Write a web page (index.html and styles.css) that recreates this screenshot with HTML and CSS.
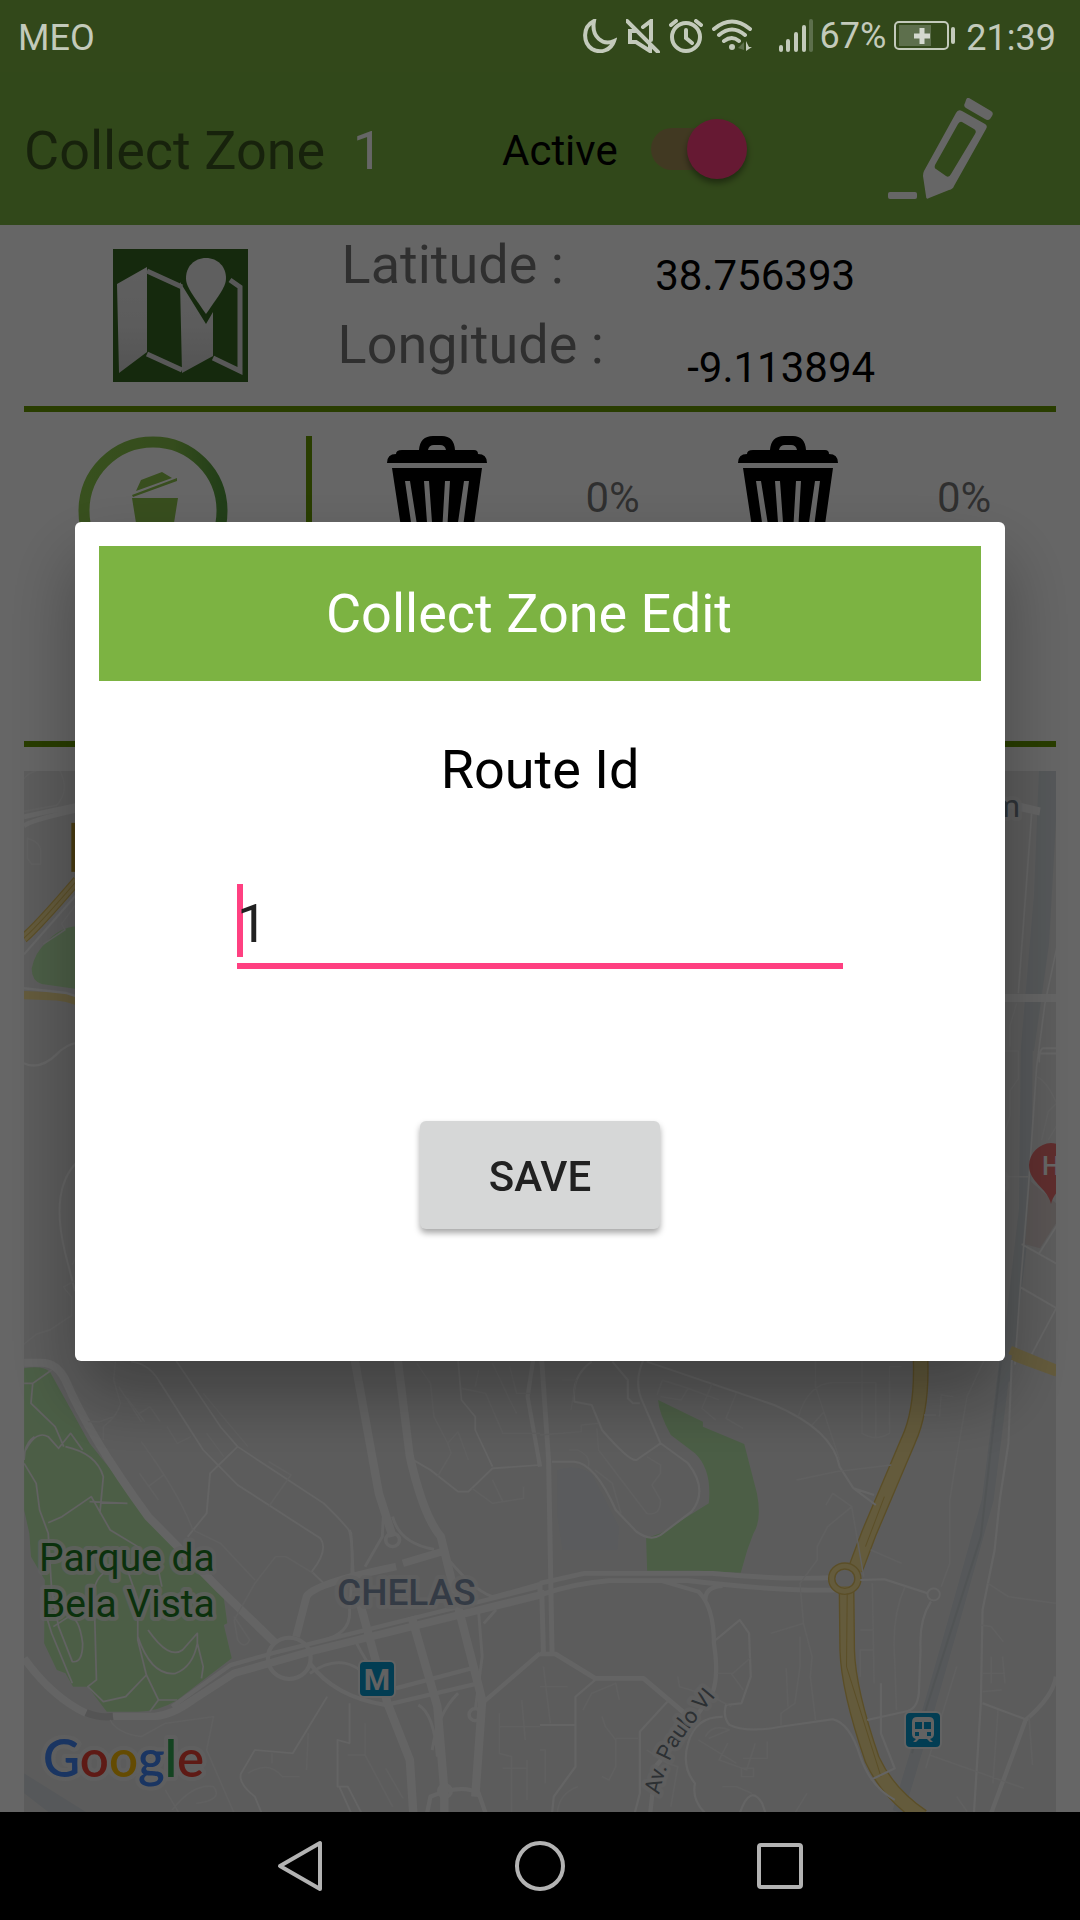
FILE: index.html
```
<!DOCTYPE html>
<html lang="en">
<head>
<meta charset="utf-8">
<meta name="viewport" content="width=device-width, initial-scale=1">
<title>Collect Zone</title>
<link rel="stylesheet" href="styles.css">
</head>
<body>
<div class="status">
  <span class="status-text">MEO</span>
  <div class="status-icons">
    <svg width="34" height="34" viewBox="0 0 34 34" class="line-icon"><path d="M11 2C-1 8 0 24 9 30c9 5 19 1 22-8C20 27 8 18 11 2Z"/></svg>
    <svg width="34" height="34" viewBox="0 0 34 34" class="line-icon"><path d="M1 2l31 31M17 8l8-6v19M10 12H4v11h6l14 9v-6"/></svg>
    <svg width="34" height="34" viewBox="0 0 34 34" class="line-icon"><circle cx="17" cy="18" r="14"/><path d="M17 11v8l6 5M2 6l5-4M32 6l-5-4"/></svg>
    <svg width="40" height="34" viewBox="0 0 40 34" class="line-icon"><path d="M2 10Q20-5 38 10M7 16Q20 5 33 16M12 22q8-6 15 0"/><circle cx="20" cy="28" r="3" class="solid"/><path d="M34 22v10l6-4h-3z" class="solid"/><path d="M26 29l6-6v8z" class="faint"/></svg>
  </div>
  <svg width="36" height="34" viewBox="0 0 36 34" class="signal line-icon"><path d="M3 28v3M10 22v9M18 15v16M26 8v23" /><path d="M33 2v29" class="dim"/></svg>
  <span class="battery-text">67%</span>
  <svg width="62" height="34" viewBox="0 0 62 34"><rect x="1" y="3" width="53" height="27" rx="4" fill="none" stroke="#c3cabb" stroke-width="2"/><rect x="5" y="6" width="32" height="21" fill="#5d6f4c"/><path d="M28 9v16M20 17h16" stroke="#d4d9cf" stroke-width="5"/><path d="M59 10v13" stroke="#c3cabb" stroke-width="4" stroke-linecap="round"/></svg>
  <span class="status-text">21:39</span>
</div>

<div class="page">
  <header class="appbar">
    <h1 class="title">Collect Zone <span class="zone-number">1</span></h1>
    <label class="active-label" for="active">Active</label>
    <input class="switch" id="active" type="checkbox" role="switch" checked>
    <button class="edit" aria-label="Edit zone"><svg width="106" height="102" viewBox="0 0 106 102" fill="#fff"><rect x="0" y="94" width="29" height="7" rx="2"/><path d="M81 0L103 13Q106 15 104 18L102 21Q100 23 97 21L78 10Q75 8 77 5L78 2Q79-1 81 0Z"/><path fill-rule="evenodd" d="M74 13L97 26Q100 28 98 31L66 88Q65 91 61 92L41 100Q38 102 38 98L35 78Q35 75 36 73L68 15Q70 11 74 13ZM74 24Q72 23 70 26L47 67Q46 70 48 71L58 78Q61 80 63 76L87 36Q89 33 86 31Z"/></svg></button>
  </header>

  <main class="content">
    <section class="position">
      <svg class="map-icon" viewBox="0 0 135 133"><defs><linearGradient id="paper" x2="0" y2="1"><stop stop-color="#eee"/><stop offset=".55" stop-color="#e6e6e6"/><stop offset="1" stop-color="#d0d0d0"/></linearGradient></defs><rect width="135" height="133" fill="#356721"/><path fill="url(#paper)" d="M4 35L34 18V103L6 124ZM67 33L93 75L100 63V107L69 124Z"/><path fill="none" stroke="#ddd" stroke-width="5" d="M34 22L69 38M34 105L69 121M100 109L127 122V38L117 31"/><path fill="#ededed" d="M93 9c-12 0-20 9-20 20 0 7 3 12 20 36 17-24 20-29 20-36 0-11-8-20-20-20z"/></svg>
      <div class="labels"><span class="latitude">Latitude :</span><span>Longitude :</span></div>
      <div class="values"><span>38.756393</span><span class="longitude">-9.113894</span></div>
    </section>
    <section class="bins">
      <div class="bin-logo"><svg width="150" height="150" viewBox="0 0 150 150"><defs><linearGradient id="ring"><stop stop-color="#8cc84b"/><stop offset=".65" stop-color="#84be49"/><stop offset="1" stop-color="#559b3e"/></linearGradient></defs><circle cx="75" cy="75" r="69" fill="none" stroke="url(#ring)" stroke-width="11"/><path fill="#8cc34b" d="M54 62H100L91 118H63ZM54 59L99 42V45L55 61ZM58 55L63 44L84 36L94 42Z"/></svg></div>
      <div class="bin-list">
        <svg class="bin" width="100" height="124" viewBox="0 0 100 124"><path id="bin-shape" fill-rule="evenodd" d="M0 27Q0 18 9 18Q9 14 15 14H32Q33 0 46 0H55Q67 0 68 14H87Q91 14 91 18Q100 18 100 27ZM41 14H59Q58 9 53 9H47Q42 9 41 14ZM5 32H95L82 124H19ZM18 45L28 114H34L23 45ZM37 45L42 114H47L42 45ZM58 45L54 114H59L63 45ZM77 45L67 114H73L82 45Z"/></svg>
        <span class="level">0%</span>
        <svg class="bin" width="100" height="124" viewBox="0 0 100 124"><use href="#bin-shape"/></svg>
        <span class="level">0%</span>
      </div>
    </section>
    <section class="map">
      <svg class="map-art" viewBox="0 0 1032 1041" preserveAspectRatio="xMidYMid slice" aria-label="Map of Chelas">
        <rect width="1032" height="1041" fill="#e7e7e7"/>
        <!-- north-west edge -->
        <g transform="translate(-24 -31) scale(.3333 .4082)" class="roads">
          <path d="M95 560Q105 520 140 495Q175 460 230 456V610L125 598Q95 590 95 560Z" class="park"/>
          <path d="M72 485Q120 450 230 345" class="motor-edge w26"/><path d="M72 485Q120 450 230 345" class="motor w20"/><path d="M72 485Q120 450 230 345" class="motor-edge w2"/>
          <path d="M214 203h20v120h-20z" class="shield"/>
          <path d="M72 625L170 628Q200 630 230 640" class="motor w20"/>
          <path d="M72 188L230 160M72 210Q100 195 230 172" class="w12"/>
          <path d="M72 525L230 378M72 608L200 620L230 628M72 792Q120 810 170 770Q200 745 230 742M230 1035Q150 1100 195 1255L225 1350" class="w6"/>
          <path d="M72 95Q85 80 110 75M180 75Q210 125 170 160L72 175M80 240Q120 250 122 270V304H95L82 290V240M230 400L185 450L195 465L130 500M72 1480L110 1455L150 1445L215 1410V1365L190 1340L225 1325M215 1285Q228 1275 230 1250" class="small"/>
        </g>
        <!-- eastern edge -->
        <g transform="translate(956 -31) scale(.3333 .4082)" class="roads">
          <path d="M195 70L180 380L140 760L135 1150L75 1570" class="rail w36"/><path d="M225 70L195 500L150 760" class="rail w24"/>
          <path d="M150 1080L235 1140V1175L180 1245L135 1235Z" class="clinic"/>
          <path d="M60 632H230M72 155L180 175" class="w20"/>
          <path d="M230 510L195 645L170 800L145 1100L120 1350L105 1530M155 180L115 620M230 755H190Q178 755 178 790M178 768H230M125 1235L230 1283M120 1340L230 1392M230 1390L155 1505M178 1257L230 1190" class="w5"/>
          <path d="M110 645L90 700V750M72 762H115V830L90 860V920L75 960V1070H145M170 825Q200 835 230 890L205 910L185 980M205 980L230 945" class="small"/>
          <path d="M95 1507L230 1548" class="motor w24"/>
        </g>
        <!-- south-west quarter -->
        <g transform="translate(-24 579) scale(.3444 .3333)" class="roads">
          <path d="M70 55Q120 45 145 65L260 280L440 510L650 745L660 820L650 825L673 925L515 1050Q460 1085 400 1085H310L255 1010H212L190 970L165 960L128 880L130 690L90 620L85 550L70 480Z" class="park"/>
          <path d="M70 1270L250 1386H140L70 1330Z" class="rail-fill"/>
          <path d="M70 38H120Q165 38 190 90Q260 260 430 500L640 720L800 880" class="w24"/>
          <path d="M70 925Q150 1040 250 1090M328 1099H450Q500 1095 560 1050L680 970L900 905L1568 735" class="w22"/>
          <path d="M250 1088Q290 1105 328 1099" class="tunnel w22"/>
          <path d="M500 1070L670 945L790 910L1568 710" class="w12"/>
          <circle cx="840" cy="925" r="62" class="w12"/>
          <path d="M1030 30L1100 430L1140 560M1155 30L1190 320Q1230 500 1280 560L1330 770L1400 1050L1380 1340M1040 740L1125 1060L1190 1230L1200 1390M1195 800L1270 1070L1290 1320V1390" class="w24"/>
          <path d="M860 860L890 740Q910 700 1150 650M1170 640L1300 600" class="w22"/>
          <path d="M900 940Q970 1040 1120 1065L1390 1000M1150 1015L1370 955M1400 1060L1568 910M1240 1390L1250 1340Q1340 1300 1390 1330L1410 1390M1548 30L1532 140L1568 350" class="w12"/>
          <circle cx="1140" cy="570" r="20" class="w10"/><circle cx="1380" cy="1094" r="18" class="w10"/><circle cx="1292" cy="1323" r="18" class="w10"/>
          <path d="M1115 460L1110 560L1060 650M1140 500Q1160 580 1260 598M1280 600Q1370 720 1430 740L1568 700M1015 540Q1030 600 1015 780Q1020 850 940 870M1030 870Q1070 950 1110 1000M1390 790L1400 920L1380 1080M1440 780L1405 820M1215 1065Q1260 1090 1270 1220M1330 1030Q1270 1090 1255 1200M900 970Q1010 890 1090 1010" class="w8"/>
          <path d="M380 35Q430 40 460 90L590 300L690 405L930 565Q955 600 905 665L950 710M510 30L640 230L690 290L940 460Q1000 520 1020 550L1030 720M690 290L610 370L600 490L545 560M950 1040L850 1210L740 1200L700 1270Q690 1300 740 1340L760 1390M1015 1060V1180L980 1170V1310H1010L1050 1390M985 1310L1020 1390M1200 330L1250 360L1330 425H1360L1430 355L1568 345M1330 30L1340 150L1380 200V240L1430 350" class="w5"/>
          <path d="M335 35L330 90L350 160Q340 200 300 230V270M255 215H290L330 200M345 110L410 215M370 145L420 215M405 190L435 170L465 215M485 230L515 280L555 260M600 250L650 320M405 370L460 450M430 410L475 375M410 275Q520 430 560 540L640 580L740 690M590 130L720 290M780 335L845 375L780 470M800 620L740 700L680 810L690 870Q710 900 725 870L680 800M800 620H830L910 670M320 1110Q340 1150 410 1160L480 1120L620 1100L600 1200L680 1390M480 1320L520 1390M570 1360Q650 1350 620 1310Q560 1300 500 1380M790 1210V1240M720 1270Q780 1230 820 1280H870M895 1150L890 1260M1060 1120V1215L1140 1370M1010 1215H1060M1120 1255L1170 1345M1210 40L1250 100L1260 200L1300 280L1310 310L1270 380M1390 60L1380 110M1430 40L1480 150M1340 115L1410 130L1460 250H1568M1330 245L1300 280M1330 245L1360 330M1430 390L1460 455M1370 415L1430 460L1520 445V410M1480 50L1500 130H1540M1480 150L1500 190M1450 1090V1210L1485 1220V1386M1450 1130H1568M1515 1050L1525 1170M1530 1230V1350M1460 1255H1530" class="small"/>
          <path d="M70 100H95L150 60M95 100L90 160L160 230L185 290M75 300Q105 240 140 260L170 295L205 250L240 300M70 330Q70 280 100 260M190 290Q280 310 300 380L290 490M70 340L105 400L115 480L140 550L150 720L170 830L210 935Q240 940 240 880Q230 800 200 800L155 830M140 518L180 500L265 440L320 540L400 590L460 660L470 710M260 455L370 460M135 800L150 850L210 1000M300 670Q260 700 275 800L280 990L255 1010L300 1055L365 1040L425 975L400 870V750L370 660M425 975L460 1050H515M400 860Q440 980 510 970Q560 950 573 880V850L530 900Q490 930 430 840M573 880L590 950L585 985M435 1085L460 1050" class="park-path"/>
        </g>
        <!-- south-east quarter -->
        <g transform="translate(516 579) scale(.3444 .3333)" class="roads">
          <path d="M343 150L473 215V230L593 282L630 430Q645 510 620 550L602 600L583 668L460 662H311L308 565L350 550L490 460Q500 360 450 310L380 255Q345 190 343 150Z" class="park"/>
          <path d="M50 360Q100 340 150 370L230 530L225 600H65L50 500Z" class="grounds"/>
          <path d="M1355 0L1300 450L1200 820L1100 1180L1040 1386" class="rail w34"/><path d="M1340 20L1280 560L1080 1210" class="rail-center"/>
          <path d="M0 700L130 670L280 670H500Q700 690 850 683M0 735Q100 700 200 692H430Q700 725 860 720" class="w14"/>
          <path d="M5 30L25 330L35 910M5 720L10 910M0 912H45L160 985H300L420 1090M0 700V730" class="w14"/>
          <path d="M320 1390L335 1250L440 1120L500 1030Q520 980 505 880Q505 770 460 725L350 692M480 750Q480 710 530 708M1310 1390L1410 1110Q1490 1040 1498 980" class="w12"/>
          <path d="M1105 30Q1110 180 1070 270L955 550L915 660M890 710L892 900Q895 1020 965 1230Q1010 1330 1110 1400" class="motor-edge w46"/><path d="M1105 30Q1110 180 1070 270L955 550L915 660M890 710L892 900Q895 1020 965 1230Q1010 1330 1110 1400" class="motor w38"/>
          <circle cx="885" cy="686" r="38" class="motor-edge w22"/><circle cx="885" cy="686" r="38" class="motor w14"/>
          <path d="M1000 440L945 590M892 730L890 950L990 1280" class="motor-edge w2"/>
          <path d="M1365 0L1500 58" class="motor w26"/>
          <path d="M1370 30L1360 280L1335 450L1320 600L1285 780L1280 1060L1260 1390M300 30Q270 100 300 160L350 280L430 340Q490 420 440 485L350 555Q320 575 280 545L220 480Q160 340 100 335H35M350 280L280 330Q260 335 180 240L150 165L100 155Q90 80 150 35M210 35L255 90V145L270 160H290M310 35L680 165Q850 240 870 350L910 415L970 435M910 415L975 465M930 690L1000 688L1125 730M1135 755Q1100 810 1105 900L1100 1030Q1095 1080 1060 1085L950 1110M370 1055L290 1145V1330L275 1390M510 870L580 810L607 850L612 980L585 1060L540 1065Q530 1100 550 1125Q600 1150 700 1130L850 1108Q900 1120 930 1220Q960 1310 1030 1350M530 1100Q450 1100 430 1180Q410 1250 450 1300Q440 1350 480 1390M580 1390Q610 1300 645 1360L655 1390M1285 1060L1410 1108M160 990L103 1040V1250L40 1340L35 1390M0 1125H100M990 1000L990 1150L1030 1255L960 1290" class="w6"/>
          <circle cx="1143" cy="733" r="18" class="w5"/>
          <path d="M0 255L120 245V225L170 220M65 90H105L90 180M165 235L170 300L310 490Q350 500 350 450L325 405L350 370V345L310 320M160 360L210 400L235 490M85 300H110Q150 320 140 350M340 135L355 90L430 115L410 150L350 140M430 115L520 150M500 100L470 175L510 210M570 130L540 205L590 235M800 30V110L870 330M750 200Q780 100 850 98H975V265M935 30V250Q975 275 1015 250V50L1050 50M790 225L825 185M745 390L860 365L1020 345M830 465L850 430L905 470L835 530L805 590V630L755 700L765 820L790 920L785 980L800 1110M905 470L940 680M960 600L1050 640M670 850L765 820M755 860V950L740 1060L700 1090V1125M715 955L720 1070M965 700L970 1000M1060 710Q1020 800 1030 930L1035 1080M930 840H965M970 900H930V980M1290 30L1240 140L1205 350L1190 450V640L1165 710M1160 200L1165 135L1200 140M1115 195H1150M1300 700L1360 740L1498 760M1280 825L1310 830L1345 875M1310 920V1000M1343 920L1350 1000M1285 970H1350M1285 1025L1340 1020M1330 1080L1315 1300M1420 1100L1430 1245M1130 1215L1405 1315M1210 950L1120 1255M400 980L405 1010L500 1040L555 1070M515 970H560L610 925M555 970L590 1020M480 1160Q500 1120 550 1140L490 1165M545 1180L520 1230L600 1260L625 1180M660 1175V1225H590M585 1255H620V1280H585ZM530 1310H570L615 1330M460 1170L570 1240M10 950L30 1120M0 1010H80M125 1080L150 1030L220 1000L230 1050M180 1100L190 1130L220 1170V1250L200 1290L180 1280M220 1165H285M0 1200H15V1300M50 1390Q55 1330 110 1310M310 1200L370 1240L400 1250L380 1370M775 1330L740 1390M1210 1340L1240 1385" class="small"/>
        </g>
        <g class="map-text">
          <text x="15" y="800" class="place-green">Parque da</text>
          <text x="17" y="846" class="place-green">Bela Vista</text>
          <text x="313" y="834" class="district">CHELAS</text>
          <path id="street" d="M635 1024Q642 992 656 971T706 908" fill="none"/>
          <text class="street"><textPath href="#street">Av. Paulo VI</textPath></text>
          <text x="968" y="46" class="street-large">m</text>
          <text x="966" y="419" class="hospital">s</text>
          <text x="19" y="1006" class="google"><tspan fill="#4285f4">G</tspan><tspan fill="#ea4335">o</tspan><tspan fill="#fbbc05">o</tspan><tspan fill="#4285f4">g</tspan><tspan fill="#34a853">l</tspan><tspan fill="#ea4335">e</tspan></text>
        </g>
        <g stroke="#f7f7f7" stroke-width="2"><rect x="335" y="890" width="36" height="36" rx="5" fill="#079ad0"/><rect x="881" y="941" width="36" height="36" rx="5" fill="#079ad0"/></g>
        <text x="353" y="919" class="metro">M</text>
        <path fill="#f4f4f4" fill-rule="evenodd" d="M893 946h12q5 0 5 5v12q0 4-4 5l3 3h-3l-3-3h-8l-3 3h-3l3-3q-4-1-4-5v-12q0-5 5-5ZM891 951v7h7v-7ZM900 951v7h7v-7ZM891 961v4h4v-4ZM903 961v4h4v-4Z"/>
        <path fill="#ed7272" d="M1027 372a23 23 0 0 0-22 22c0 18 18 22 22 39 4-17 22-21 22-39a23 23 0 0 0-22-22Z"/>
        <text x="1018" y="404" class="pin-letter">H</text>
      </svg>
    </section>
  </main>
</div>

<div class="scrim">
  <form class="dialog" role="dialog" aria-labelledby="dialog-title">
    <h2 class="dialog-title" id="dialog-title">Collect Zone Edit</h2>
    <label class="route-label" for="route">Route Id</label>
    <div class="route-field"><input class="route-input" id="route" type="text" value="1"></div>
    <button class="save" type="button">SAVE</button>
  </form>
</div>

<nav class="navbar" aria-label="System">
  <button aria-label="Back"><svg width="50" height="54" viewBox="0 0 50 54"><path d="M45 4V50L5 27Z"/></svg></button>
  <button aria-label="Home"><svg width="54" height="54" viewBox="0 0 54 54"><circle cx="27" cy="27" r="23"/></svg></button>
  <button aria-label="Recent apps"><svg width="50" height="54" viewBox="0 0 50 54"><rect x="4" y="6" width="42" height="42" rx="2"/></svg></button>
</nav>
</body>
</html>
```

FILE: styles.css
```
* { box-sizing: border-box; }
body {
  margin: 0;
  min-height: 100vh;
  display: flex;
  flex-direction: column;
  background: #fff;
  color: #000;
  font-family: Roboto, "Noto Sans", sans-serif;
}
h1, h2 { margin: 0; font-weight: 400; }
button { border: 0; padding: 0; background: none; font: inherit; }
svg { display: block; }

.status {
  position: relative;
  z-index: 2;
  height: 72px;
  padding: 0 24px 0 18px;
  display: flex;
  align-items: center;
  background: #32481a;
  color: #c3cabb;
  font-size: 36px;
}
.status-text { padding-top: 4px; }
.status-icons { display: flex; gap: 9px; margin-left: auto; }
.signal { margin: 0 6px 0 26px; }
.battery-text { margin-right: 8px; }
.battery-text + svg { margin-right: 10px; }
.line-icon { fill: none; stroke: #c3cabb; stroke-width: 4; stroke-linecap: round; }
.line-icon .solid { fill: #c3cabb; stroke: none; }
.line-icon .faint { fill: #5d6f4c; stroke: none; }
.line-icon .dim { stroke: #5d6f4c; }

.page { flex: 1; display: flex; flex-direction: column; }
.appbar {
  min-height: 153px;
  padding: 0 24px;
  display: grid;
  grid-template-columns: 478fr 149fr 237fr 168fr;
  align-items: center;
  background: #7cb342;
}
.title { padding-top: 4px; font-size: 54px; color: rgba(0, 0, 0, .52); }
.zone-number { margin-left: 14px; color: #fff; }
.active-label { padding-top: 4px; font-size: 42px; }
.switch { appearance: none; display: grid; align-items: center; width: 96px; height: 60px; margin: 0; }
.switch::before { content: ""; grid-area: 1 / 1; width: 80px; height: 42px; border-radius: 21px; background: rgba(255, 64, 129, .3); }
.switch::after { content: ""; grid-area: 1 / 1; justify-self: end; width: 60px; height: 60px; border-radius: 50%; background: #ff4081; box-shadow: 0 4px 6px rgba(0, 0, 0, .4); }
.edit { justify-self: start; }

.content { flex: 1; display: flex; flex-direction: column; padding: 0 24px; }
.position {
  min-height: 187px;
  display: grid;
  grid-template-columns: 3fr 3fr 4fr;
  border-bottom: 6px solid #690;
}
.map-icon { width: 135px; margin: 24px 0 0 89px; }
.labels, .values { display: flex; flex-direction: column; white-space: nowrap; }
.labels { padding-left: 4px; font-size: 54px; line-height: 80px; color: rgba(0, 0, 0, .54); }
.latitude { padding-left: 4px; }
.values { padding: 13px 0 0 12px; gap: 16px; font-size: 42px; line-height: 76px; }
.longitude { padding-left: 32px; }

.bins { display: flex; padding: 24px 0; min-height: 335px; border-bottom: 6px solid #690; }
.bin-logo { flex: 0 0 288px; padding-left: 54px; border-right: 6px solid #690; }
.bin-list { flex: 1; display: grid; grid-template-columns: repeat(4, 1fr); justify-items: center; padding: 0 4px 0 37px; }
.level { font-size: 42px; line-height: 123px; color: rgba(0, 0, 0, .54); }

.map { flex: 1; margin-top: 24px; position: relative; }
.map-art { position: absolute; inset: 0; width: 100%; height: 100%; }
.roads path, .roads circle { fill: none; stroke: #fbfbfb; stroke-linejoin: round; }
.roads .park { fill: #beecb0; stroke: none; }
.roads .rail-fill { fill: #d8dde0; stroke: none; }
.roads .shield { fill: #ba982e; stroke: none; }
.roads .clinic { fill: #dfd3d1; stroke: none; }
.roads .grounds { fill: #e0e3e8; stroke: none; }
.roads .tunnel { stroke: #d3d3d3; }
.roads .small { stroke: #f0f0f0; stroke-width: 4; }
.roads .park-path { stroke: #f4f4f4; stroke-width: 5; }
.roads .rail { stroke: #d6dce0; }
.roads .rail-center { stroke: #cbd1d5; stroke-width: 6; }
.roads .motor { stroke: #f9e397; }
.roads .motor-edge { stroke: #e4c462; }
.roads .w2 { stroke-width: 3; }
.roads .w5 { stroke-width: 5; }
.roads .w6 { stroke-width: 6; }
.roads .w8 { stroke-width: 8; }
.roads .w10 { stroke-width: 10; }
.roads .w12 { stroke-width: 12; }
.roads .w14 { stroke-width: 14; }
.roads .w20 { stroke-width: 20; }
.roads .w22 { stroke-width: 22; }
.roads .w24 { stroke-width: 24; }
.roads .w26 { stroke-width: 26; }
.roads .w34 { stroke-width: 34; }
.roads .w36 { stroke-width: 36; }
.roads .w38 { stroke-width: 38; }
.roads .w46 { stroke-width: 46; }
.map-text text { paint-order: stroke; stroke: rgba(240, 240, 240, .8); stroke-width: 8px; stroke-linejoin: round; }
.place-green { font-size: 39px; fill: #1d7a22; }
.district { font-size: 37px; font-weight: 500; fill: #8393ad; }
.street { font-size: 22px; fill: #6f7880; }
.street-large { font-size: 32px; fill: #75818c; }
.hospital { font-size: 32px; fill: #e26a6a; }
.google { font-family: Lato, sans-serif; font-size: 51px; font-weight: 600; }
.metro { font-size: 30px; font-weight: 700; fill: #f4f4f4; text-anchor: middle; }
.pin-letter { font-size: 26px; font-weight: 500; fill: #fff; }

.scrim {
  position: fixed;
  inset: 0;
  z-index: 1;
  display: grid;
  align-items: center;
  padding: 72px 75px 109px;
  background: rgba(0, 0, 0, .6);
}
.dialog {
  display: flex;
  flex-direction: column;
  align-items: center;
  padding: 24px 24px 132px;
  border-radius: 6px;
  background: #fff;
  box-shadow: 0 36px 72px rgba(0, 0, 0, .32);
}
.dialog-title { align-self: stretch; padding-right: 22px; margin-bottom: 57px; background: #7cb342; color: #fff; font-size: 54px; line-height: 135px; text-align: center; }
.route-label { font-size: 54px; line-height: 64px; }
.route-field { position: relative; align-self: stretch; margin: 82px 138px 152px; border-bottom: 6px solid #ff4081; }
.route-field::before { content: ""; position: absolute; left: 0; top: 0; width: 6px; height: 73px; background: #ff4081; }
.route-input { position: relative; display: block; width: 100%; height: 79px; padding: 0; border: 0; outline: 0; background: none; font: 54px Roboto, sans-serif; color: #212121; }
.save { width: 240px; height: 108px; padding-top: 2px; border-radius: 6px; background: #d6d7d7; color: #212121; font-size: 42px; font-weight: 500; box-shadow: 0 4px 6px rgba(0, 0, 0, .35); }

.navbar { position: relative; z-index: 2; height: 108px; display: flex; justify-content: center; background: #000; }
.navbar button { width: 240px; display: grid; place-items: center; }
.navbar svg { fill: none; stroke: #b3b3b3; stroke-width: 4; stroke-linejoin: round; }
```
